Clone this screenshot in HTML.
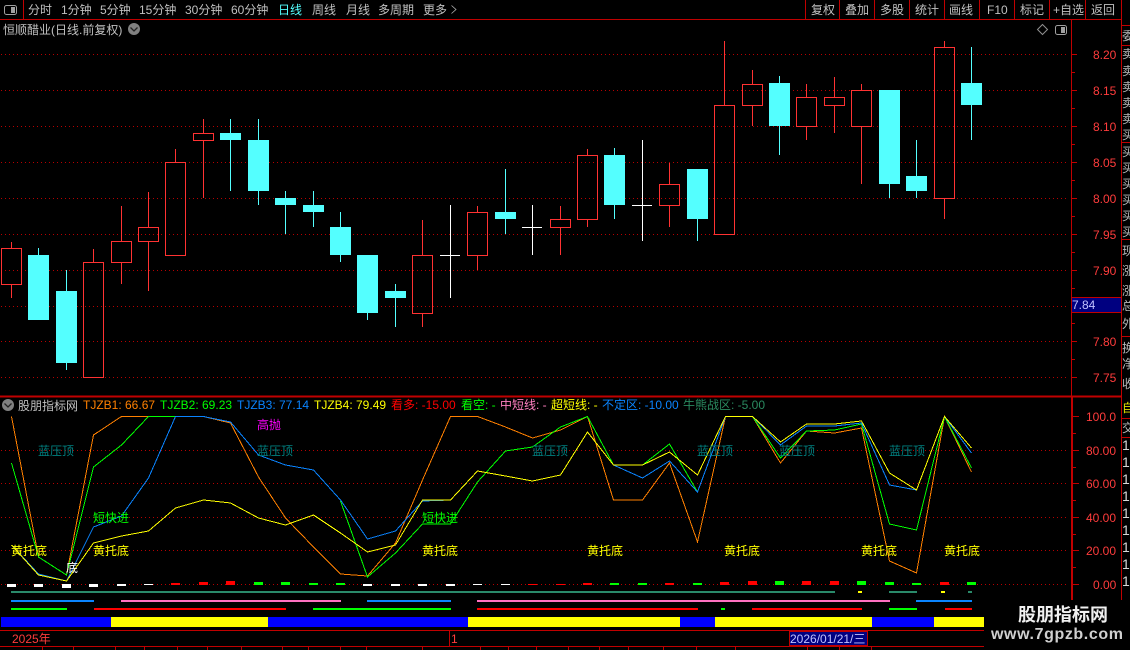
<!DOCTYPE html>
<html lang="zh"><head><meta charset="utf-8"><title>股朋指标网</title>
<style>
html,body{margin:0;padding:0;background:#000;width:1130px;height:650px;overflow:hidden}
svg{display:block}
text{font-family:"Liberation Sans","WenQuanYi Zen Hei","Noto Sans CJK SC",sans-serif;font-size:12px;dominant-baseline:auto}
.g{fill:#c0c0c0}.r{fill:#ff3c3c}.t{fill:#008080}.y{fill:#ffff00}.l{fill:#00ff00}
</style></head><body>
<svg width="1130" height="650" viewBox="0 0 1130 650" xmlns="http://www.w3.org/2000/svg">
<rect width="1130" height="650" fill="#000"/>
<g stroke="#b80000" stroke-dasharray="1 3" fill="none" shape-rendering="crispEdges">
<path d="M1 54.5H1068M1 90.5H1068M1 126.5H1068M1 162.5H1068M1 198.5H1068M1 234.5H1068M1 270.5H1068M1 306.5H1068M1 341.5H1068M1 377.5H1068M1 450.5H1068M1 483.5H1068M1 517.5H1068M1 550.5H1068M1 584.5H1068"/>
</g>
<!-- frame -->
<g stroke="#c00000" fill="none" shape-rendering="crispEdges">
<path d="M0 19.5H1122M23.5 0V19M805.5 0V19M839.5 0V19M874.5 0V19M909.5 0V19M944.5 0V19M979.5 0V19M1014.5 0V19M1049.5 0V19M1085.5 0V19M1121.5 0V600"/>
<path d="M1071.5 20V396"/>
<path d="M1071 54.5H1077M1071 90.5H1077M1071 126.5H1077M1071 162.5H1077M1071 198.5H1077M1071 234.5H1077M1071 270.5H1077M1071 341.5H1077M1071 377.5H1077M1071 72.5H1075M1071 108.5H1075M1071 144.5H1075M1071 180.5H1075M1071 216.5H1075M1071 252.5H1075M1071 288.5H1075M1071 323.5H1075M1071 359.5H1075"/>
<path d="M0 396.5H1122" stroke-width="2"/>
<path d="M1072 397V600" stroke-width="2"/>
<path d="M1071 416.5H1079M1071 450.5H1079M1071 483.5H1079M1071 517.5H1079M1071 550.5H1079M1071 584.5H1079M1071 433.5H1076M1071 467.5H1076M1071 500.5H1076M1071 534.5H1076M1071 567.5H1076"/>
<path d="M1122 25.5H1130M1122 45.5H1130M1122 142.5H1130M1122 239.5H1130M1122 336.5H1130M1122 418.5H1130M1122 437.5H1130"/>
<path d="M0 630.5H984M0 646.5H984M449.5 631V646"/>
<path d="M42.5 647V650M73.5 647V650M115.5 647V650M144.5 647V650M177.5 647V650M207.5 647V650M241.5 647V650M282.5 647V650M308.5 647V650M340.5 647V650M366.5 647V650M422.5 647V650M480.5 647V650M508.5 647V650M536.5 647V650M568.5 647V650M599.5 647V650M628.5 647V650M663.5 647V650M696.5 647V650M735.5 647V650M807.5 647V650M839.5 647V650M871.5 647V650"/>
</g>
<!-- toolbar -->
<rect x="4.5" y="5.5" width="12" height="9" rx="2" fill="none" stroke="#a0a0a0"/><rect x="11" y="7" width="4" height="6" fill="#a0a0a0"/>
<g class="g">
<text x="28" y="14" class="g">分时</text><text x="61" y="14" class="g">1分钟</text><text x="100" y="14" class="g">5分钟</text><text x="139" y="14" class="g">15分钟</text><text x="185" y="14" class="g">30分钟</text><text x="231" y="14" class="g">60分钟</text>
<text x="278" y="14" fill="#54ffff">日线</text><text x="312" y="14" class="g">周线</text><text x="346" y="14" class="g">月线</text><text x="378" y="14" class="g">多周期</text><text x="423" y="14" class="g">更多</text>
<text x="811" y="14" class="g">复权</text><text x="845" y="14" class="g">叠加</text><text x="880" y="14" class="g">多股</text><text x="915" y="14" class="g">统计</text><text x="949" y="14" class="g">画线</text><text x="987" y="14" class="g">F10</text><text x="1020" y="14" class="g">标记</text><text x="1053" y="14" class="g">+自选</text><text x="1091" y="14" class="g">返回</text>
<text x="3" y="34" class="g">恒顺醋业(日线.前复权)</text>
</g>
<path d="M451.5 5.5L456 9.5L451.5 13.5" fill="none" stroke="#b0b0b0" stroke-width=".8"/>
<circle cx="134" cy="29" r="6" fill="#808080"/><path d="M130.5 27.5L134 31L137.5 27.5" fill="none" stroke="#222" stroke-width="1.3"/>
<path d="M1042.5 24.5L1047.5 29.5L1042.5 34.5L1037.5 29.5Z" fill="none" stroke="#909090"/>
<rect x="1055.5" y="25.5" width="11" height="9" rx="2" fill="none" stroke="#a0a0a0"/><rect x="1061" y="27" width="4" height="6" fill="#a0a0a0"/>
<!-- candles -->
<path fill="none" stroke="#ff3232" shape-rendering="crispEdges" d="M1.5 248.5H21.5V284.5H1.5ZM11.5 242V248M11.5 285V298M83.5 262.5H103.5V377.5H83.5ZM93.5 249V262M111.5 241.5H131.5V262.5H111.5ZM121.5 206V241M121.5 263V284M138.5 227.5H158.5V241.5H138.5ZM148.5 192V227M148.5 242V291M165.5 162.5H185.5V255.5H165.5ZM175.5 149V162M193.5 133.5H213.5V140.5H193.5ZM203.5 119V133M203.5 141V198M412.5 255.5H432.5V313.5H412.5ZM422.5 220V255M422.5 314V327M467.5 212.5H487.5V255.5H467.5ZM477.5 206V212M477.5 256V270M550.5 219.5H570.5V227.5H550.5ZM560.5 206V219M560.5 228V255M577.5 155.5H597.5V219.5H577.5ZM587.5 149V155M587.5 220V227M659.5 184.5H679.5V205.5H659.5ZM669.5 163V184M669.5 206V227M714.5 105.5H734.5V234.5H714.5ZM724.5 41V105M742.5 84.5H762.5V105.5H742.5ZM752.5 70V84M752.5 106V126M796.5 97.5H816.5V126.5H796.5ZM806.5 84V97M806.5 127V140M824.5 97.5H844.5V105.5H824.5ZM834.5 77V97M834.5 106V133M851.5 90.5H871.5V126.5H851.5ZM861.5 84V90M861.5 127V184M934.5 47.5H954.5V198.5H934.5ZM944.5 41V47M944.5 199V219"/>
<path fill="none" stroke="#54ffff" shape-rendering="crispEdges" d="M38.5 248V255M66.5 270V370M230.5 119V191M258.5 119V205M285.5 191V234M313.5 191V227M340.5 212V262M367.5 255V320M395.5 284V327M505.5 169V234M614.5 148V219M697.5 169V241M779.5 76V155M889.5 90V198M916.5 140V198M971.5 47V140"/>
<g fill="#54ffff" shape-rendering="crispEdges">
<rect x="28" y="255" width="21" height="65"/><rect x="56" y="291" width="21" height="72"/><rect x="220" y="133" width="21" height="7"/><rect x="248" y="140" width="21" height="51"/><rect x="275" y="198" width="21" height="7"/><rect x="303" y="205" width="21" height="7"/><rect x="330" y="227" width="21" height="28"/><rect x="357" y="255" width="21" height="58"/><rect x="385" y="291" width="21" height="7"/><rect x="495" y="212" width="21" height="7"/><rect x="604" y="155" width="21" height="50"/><rect x="687" y="169" width="21" height="50"/><rect x="769" y="83" width="21" height="43"/><rect x="879" y="90" width="21" height="94"/><rect x="906" y="176" width="21" height="15"/><rect x="961" y="83" width="21" height="22"/>
</g>
<path fill="none" stroke="#fff" shape-rendering="crispEdges" d="M450.5 205V298M440 255.5H460M532.5 205V255M522 227.5H542M642.5 140V241M632 205.5H652"/>
<!-- axis labels -->
<g class="r">
<text x="1093" y="59" class="r">8.20</text><text x="1093" y="95" class="r">8.15</text><text x="1093" y="131" class="r">8.10</text><text x="1093" y="167" class="r">8.05</text><text x="1093" y="203" class="r">8.00</text><text x="1093" y="239" class="r">7.95</text><text x="1093" y="275" class="r">7.90</text><text x="1093" y="346" class="r">7.80</text><text x="1093" y="382" class="r">7.75</text>
<text x="1086" y="421" class="r">100.0</text><text x="1086" y="455" class="r">80.00</text><text x="1086" y="488" class="r">60.00</text><text x="1086" y="522" class="r">40.00</text><text x="1086" y="555" class="r">20.00</text><text x="1093" y="589" class="r">0.00</text>
</g>
<rect x="1071.5" y="297.5" width="50" height="15" fill="#000080" stroke="#c00000"/>
<text x="1072" y="309" fill="#c0c0ff">7.84</text>
<!-- right strip -->
<svg x="1122" y="0" width="8" height="600">
<g fill="#b8b8b8">
<text x="0" y="40">委</text>
<text x="0" y="58">卖</text><text x="0" y="75">卖</text><text x="0" y="91">卖</text><text x="0" y="107">卖</text><text x="0" y="123">卖</text><text x="0" y="139">买</text>
<text x="0" y="156">买</text><text x="0" y="172">买</text><text x="0" y="188">买</text><text x="0" y="204">买</text><text x="0" y="220">买</text><text x="0" y="236">买</text>
<text x="0" y="255">现</text><text x="0" y="275">涨</text><text x="0" y="295">涨</text><text x="0" y="310">总</text><text x="0" y="328">外</text>
<text x="0" y="352">换</text><text x="0" y="368">净</text><text x="0" y="388">收</text>
<text x="0" y="412" fill="#e0e000">自</text><text x="0" y="432">交</text>
<g style="font-size:14px" fill="#d8d8d8"><text x="0" y="450" style="font-size:14px">1</text><text x="0" y="467" style="font-size:14px">1</text><text x="0" y="484" style="font-size:14px">1</text><text x="0" y="501" style="font-size:14px">1</text><text x="0" y="518" style="font-size:14px">1</text><text x="0" y="535" style="font-size:14px">1</text><text x="0" y="552" style="font-size:14px">1</text><text x="0" y="569" style="font-size:14px">1</text><text x="0" y="586" style="font-size:14px">1</text></g>
</g></svg>
<!-- legend -->
<circle cx="8" cy="405" r="6" fill="#808080"/><path d="M4.5 403.5L8 407L11.5 403.5" fill="none" stroke="#222" stroke-width="1.3"/>
<text x="18" y="410" class="g">股朋指标网</text>
<text x="83" y="409" fill="#ff8000">TJZB1: 66.67</text><text x="160" y="409" fill="#00ff00">TJZB2: 69.23</text><text x="237" y="409" fill="#0a84ff">TJZB3: 77.14</text><text x="314" y="409" fill="#ffff00">TJZB4: 79.49</text>
<text x="391" y="409" fill="#ff0000">看多: -15.00</text><text x="461" y="409" fill="#00ff00">看空: -</text><text x="500" y="409" fill="#ff80c0">中短线: -</text><text x="551" y="409" fill="#ffff00">超短线: -</text><text x="602" y="409" fill="#0a84ff">不定区: -10.00</text><text x="683" y="409" fill="#2a8a60">牛熊战区: -5.00</text>
<!-- indicator lines -->
<g fill="none" stroke-width="1" shape-rendering="crispEdges">
<path stroke="#ff8000" d="M11.5 416.5L38.5 557L66.5 575L93.5 435L121.5 416.5H203.5L230.5 423L258.5 477L285.5 518L313.5 547L340.5 574L367.5 576L395.5 543L422.5 480L450.5 416.5H477.5L505.5 427L532.5 438L560.5 430L587.5 416.5L613.5 500H642.5L669.5 463L697.5 542L725.5 416.5H752.5L780.5 463L806.5 431L834.5 433L861.5 428L889.5 561L916.5 573L944.5 416.5L971.5 472"/>
<path stroke="#00ff00" d="M11.5 463L38.5 557L66.5 575L93.5 467L121.5 445L148.5 416.5H175.5M340.5 501L367.5 577L395.5 553L422.5 524L450.5 524L477.5 482L505.5 451L532.5 447L560.5 427L587.5 416.5L613.5 465H642.5L669.5 444L697.5 492L725.5 416.5H752.5L780.5 458L806.5 431L834.5 430L861.5 424L889.5 524L916.5 530L944.5 416.5L971.5 468"/>
<path stroke="#0a84ff" d="M11.5 545L38.5 574L66.5 581L93.5 527L121.5 516L148.5 478L175.5 416.5H203.5L230.5 422L258.5 455L285.5 465L313.5 470L340.5 500L367.5 539L395.5 531L422.5 501L450.5 500M613.5 465L642.5 478L669.5 461L697.5 492L725.5 416.5H752.5L780.5 445L806.5 426L834.5 426L861.5 423L889.5 485L916.5 490L944.5 416.5L971.5 453"/>
<path stroke="#ffff00" d="M11.5 545L38.5 575L66.5 581L93.5 543L121.5 536L148.5 531L175.5 508L203.5 500L230.5 503L258.5 518L285.5 525L313.5 515L340.5 533L367.5 552L395.5 545L422.5 500H450.5L477.5 471L505.5 476L532.5 481L560.5 475L587.5 432L613.5 465H642.5L669.5 452L697.5 475L725.5 416.5H752.5L780.5 442L806.5 424L834.5 424L861.5 421L889.5 473L916.5 490L944.5 416.5L971.5 448"/>
</g>
<!-- labels -->
<text x="38" y="455" class="t">蓝压顶</text><text x="257" y="455" class="t">蓝压顶</text><text x="532" y="455" class="t">蓝压顶</text><text x="697" y="455" class="t">蓝压顶</text><text x="779" y="455" class="t">蓝压顶</text><text x="889" y="455" class="t">蓝压顶</text>
<text x="257" y="429" fill="#ff00ff">高抛</text>
<text x="93" y="522" class="l">短快进</text><text x="422" y="522" class="l">短快进</text>
<text x="11" y="555" class="y">黄托底</text><text x="93" y="555" class="y">黄托底</text><text x="422" y="555" class="y">黄托底</text><text x="587" y="555" class="y">黄托底</text><text x="724" y="555" class="y">黄托底</text><text x="861" y="555" class="y">黄托底</text><text x="944" y="555" class="y">黄托底</text>
<text x="66" y="572" fill="#fff">底</text>
<!-- bars -->
<g shape-rendering="crispEdges">
<g fill="#fff"><rect x="7" y="584" width="9" height="3"/><rect x="34" y="584" width="9" height="3"/><rect x="62" y="584" width="9" height="4"/><rect x="89" y="584" width="9" height="3"/><rect x="117" y="584" width="9" height="2"/><rect x="144" y="584" width="9" height="1"/><rect x="363" y="584" width="9" height="2"/><rect x="391" y="584" width="9" height="2"/><rect x="418" y="584" width="9" height="2"/><rect x="446" y="584" width="9" height="2"/><rect x="473" y="584" width="9" height="1"/><rect x="501" y="584" width="9" height="1"/></g>
<g fill="#ff0000"><rect x="171" y="583" width="9" height="2"/><rect x="199" y="582" width="9" height="3"/><rect x="226" y="581" width="9" height="4"/><rect x="528" y="584" width="9" height="1"/><rect x="556" y="584" width="9" height="1"/><rect x="583" y="583" width="9" height="2"/><rect x="665" y="583" width="9" height="2"/><rect x="720" y="582" width="9" height="3"/><rect x="748" y="581" width="9" height="4"/><rect x="802" y="581" width="9" height="4"/><rect x="830" y="581" width="9" height="4"/><rect x="940" y="582" width="9" height="3"/></g>
<g fill="#00ff00"><rect x="254" y="582" width="9" height="3"/><rect x="281" y="582" width="9" height="3"/><rect x="309" y="583" width="9" height="2"/><rect x="336" y="583" width="9" height="2"/><rect x="610" y="583" width="9" height="2"/><rect x="638" y="583" width="9" height="2"/><rect x="693" y="583" width="9" height="2"/><rect x="775" y="581" width="9" height="4"/><rect x="857" y="581" width="9" height="4"/><rect x="885" y="582" width="9" height="3"/><rect x="912" y="583" width="9" height="2"/><rect x="967" y="582" width="9" height="3"/></g>
<g fill="#2a8a6a"><rect x="11" y="591" width="824" height="2"/><rect x="889" y="591" width="28" height="2"/><rect x="968" y="591" width="4" height="2"/></g>
<g fill="#ffff00"><rect x="858" y="591" width="4" height="2"/><rect x="941" y="591" width="4" height="2"/></g>
<g fill="#0a84ff"><rect x="11" y="600" width="83" height="2"/><rect x="367" y="600" width="84" height="2"/><rect x="916" y="600" width="56" height="2"/></g>
<g fill="#ff70c0"><rect x="121" y="600" width="220" height="2"/><rect x="477" y="600" width="413" height="2"/></g>
<g fill="#00ff00"><rect x="11" y="608" width="56" height="2"/><rect x="313" y="608" width="138" height="2"/><rect x="721" y="608" width="4" height="2"/><rect x="889" y="608" width="28" height="2"/></g>
<g fill="#ff0000"><rect x="94" y="608" width="192" height="2"/><rect x="477" y="608" width="221" height="2"/><rect x="752" y="608" width="110" height="2"/><rect x="945" y="608" width="27" height="2"/></g>
<g fill="#0000ff"><rect x="1" y="617" width="110" height="10"/><rect x="268" y="617" width="200" height="10"/><rect x="680" y="617" width="35" height="10"/><rect x="872" y="617" width="62" height="10"/></g>
<g fill="#ffff00"><rect x="111" y="617" width="157" height="10"/><rect x="468" y="617" width="212" height="10"/><rect x="715" y="617" width="157" height="10"/><rect x="934" y="617" width="50" height="10"/></g>
</g>
<!-- bottom -->
<text x="12" y="643" fill="#ff3c3c">2025年</text>
<text x="451" y="643" fill="#ff3c3c">1</text>
<rect x="789.5" y="631.5" width="78" height="14" fill="#000080" stroke="#c00000"/>
<text x="790" y="643" fill="#c0c0ff">2026/01/21/三</text>
<!-- watermark -->
<rect x="985" y="600" width="145" height="50" fill="#000"/>
<text x="1018" y="621" fill="#f0f0f0" font-weight="bold" style="font-size:18px">股朋指标网</text>
<text x="991" y="639" fill="#d0d0d0" font-weight="bold" style="font-size:16px;letter-spacing:.6px">www.7gpzb.com</text>
</svg>
</body></html>
